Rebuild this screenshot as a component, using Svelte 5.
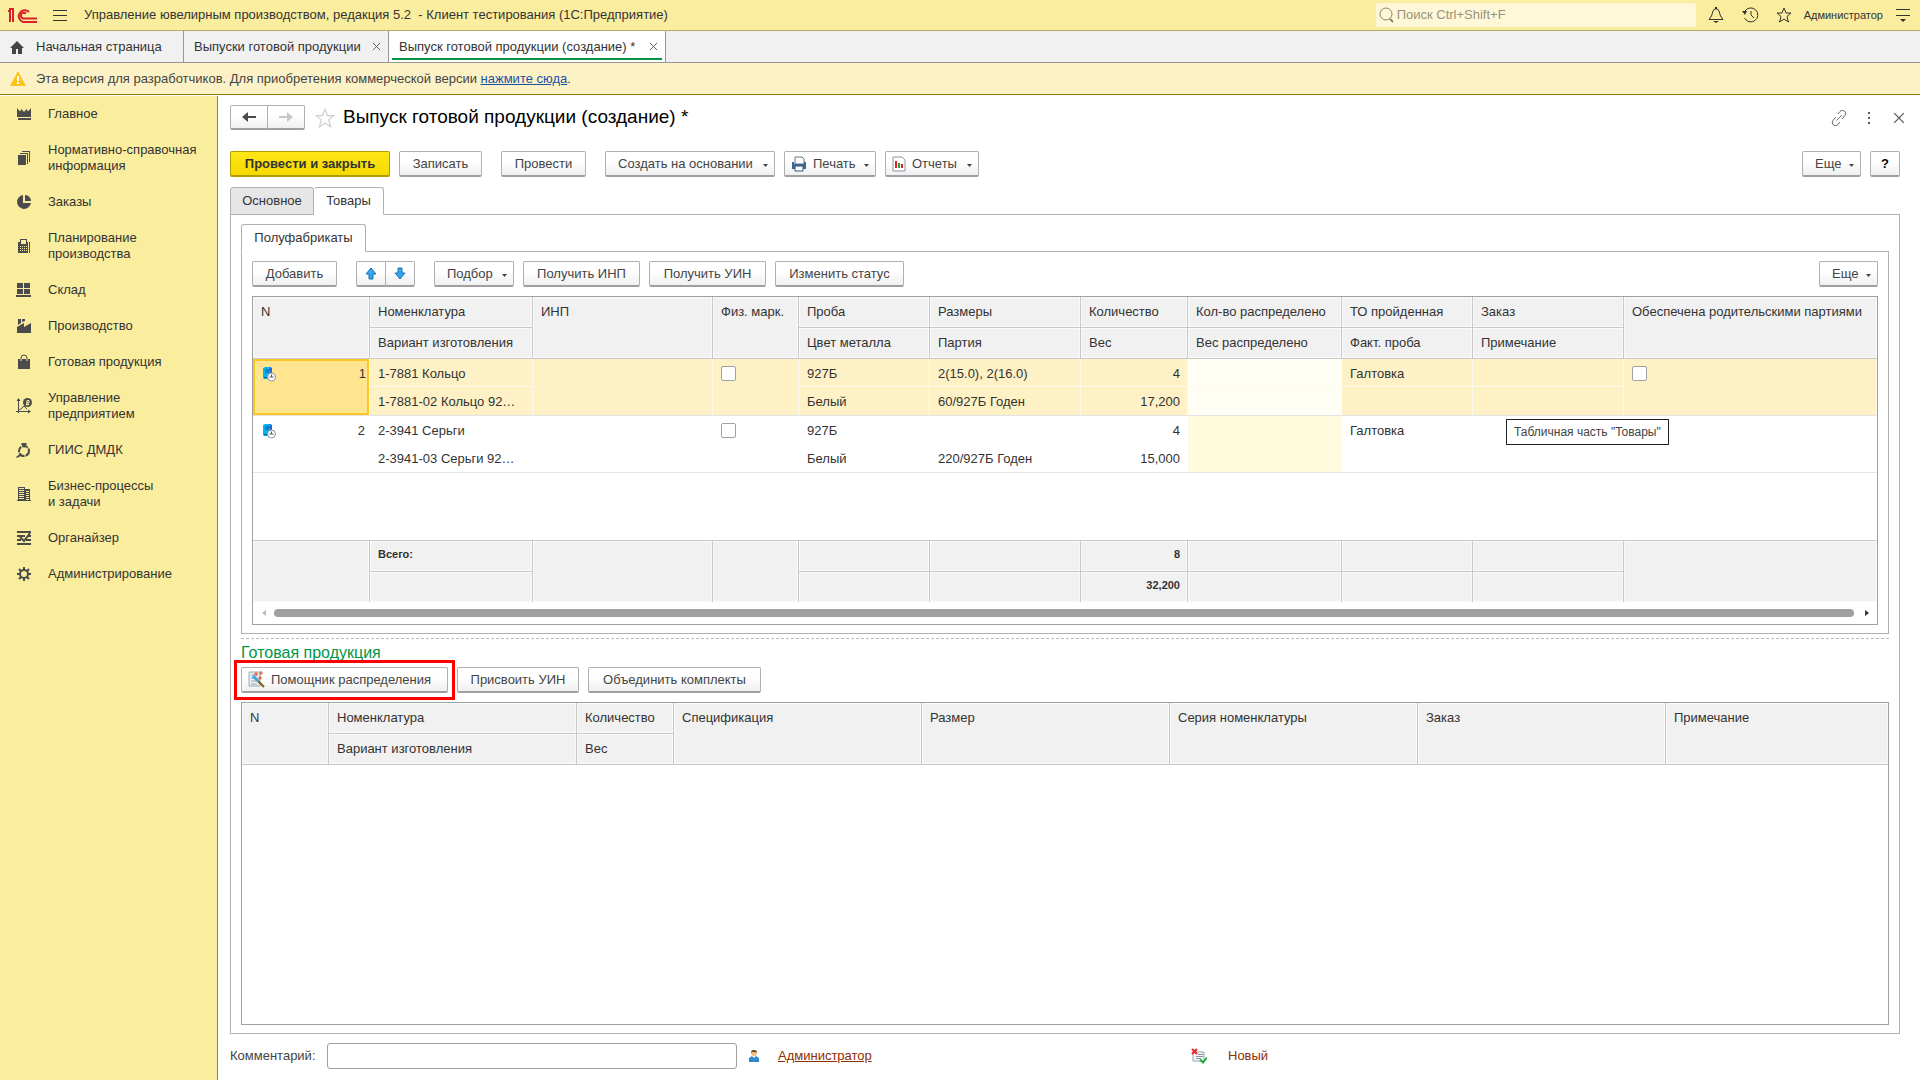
<script lang="ts">
  const sections = [
    { icon: 'crown', lines: ['Главное'] },
    { icon: 'docs', lines: ['Нормативно-справочная', 'информация'] },
    { icon: 'pie', lines: ['Заказы'] },
    { icon: 'calc', lines: ['Планирование', 'производства'] },
    { icon: 'store', lines: ['Склад'] },
    { icon: 'factory', lines: ['Производство'] },
    { icon: 'bag', lines: ['Готовая продукция'] },
    { icon: 'chart', lines: ['Управление', 'предприятием'] },
    { icon: 'ring', lines: ['ГИИС ДМДК'] },
    { icon: 'building', lines: ['Бизнес-процессы', 'и задачи'] },
    { icon: 'organizer', lines: ['Органайзер'] },
    { icon: 'gear', lines: ['Администрирование'] }
  ];

  const goodsCols = [117, 163, 180, 86, 131, 151, 107, 154, 131, 151];
  const goods = [
    { n: 1, name: '1-7881 Кольцо', variant: '1-7881-02 Кольцо 92…', probe: '927Б', color: 'Белый', sizes: '2(15.0), 2(16.0)', lot: '60/927Б Годен', qty: '4', weight: '17,200', op: 'Галтовка' },
    { n: 2, name: '2-3941 Серьги', variant: '2-3941-03 Серьги 92…', probe: '927Б', color: 'Белый', sizes: '', lot: '220/927Б Годен', qty: '4', weight: '15,000', op: 'Галтовка' }
  ];

  let selected = $state(1);
  let comment = $state('');
</script>

{#snippet sectionIcon(name: string)}
  <svg width="16" height="16" viewBox="0 0 16 16" fill="#4b4b4b" aria-hidden="true">
    {#if name === 'crown'}
      <path d="M1 2l3 3.500L5.500 3 8 6l2.500-3L12 5.500 15 2v9H1zM2 12h13v2H2z" />
    {:else if name === 'docs'}
      <path d="M2 5h8v10H2zM4 3h8v11h-1V4H4zM6 1h8v11h-1V2H6z" />
    {:else if name === 'pie'}
      <path d="M7 1v8h8A7 7 0 1 1 7 1zM9 1a6 6 0 0 1 6 6H9z" />
    {:else if name === 'calc'}
      <path fill-rule="evenodd" d="M2 4h2V1h7v3h1v11H2zM5 2v4h5V2zM4 8v1h1V8zM6 8v1h1V8zM8 8v1h1V8zM10 8v1h1V8zM4 10v1h1v-1zM6 10v1h1v-1zM8 10v1h1v-1zM10 10v1h1v-1zM4 12v1h1v-1zM6 12v1h1v-1zM8 12v1h1v-1zM10 12v1h1v-1zM13 4h1v11h-1z" />
    {:else if name === 'store'}
      <path d="M1 1h6v5H1zM8 1h6v5H8zM1 7h6v5H1zM8 7h6v5H8zM0 13h15v2H0z" />
    {:else if name === 'factory'}
      <path d="M2 1h3v4l-3 2zM6 1h3v2L6 4zM1 9l7-4v4l7-4v10H1z" />
    {:else if name === 'bag'}
      <path d="M2 5h12v10H2z" />
      <path d="M5 7V4a3 3 0 0 1 6 0v3" fill="none" stroke="#4b4b4b" />
      <path d="M5 5v2M11 5v2" stroke="#fbed9e" />
    {:else if name === 'chart'}
      <path d="M2.500 1v14M0 13.500h14M3 12l3-2 2-2 3 3" fill="none" stroke="#4b4b4b" />
      <path d="M2.500 0l2 3h-4zM15 13.500l-3-2v4z" />
      <circle cx="11.500" cy="4.500" r="4.500" />
      <path d="M11 7.500V2.500h2v2.500h-3M10 6.500h3" fill="none" stroke="#fbed9e" />
    {:else if name === 'ring'}
      <circle cx="8" cy="9" r="5" fill="none" stroke="#4b4b4b" stroke-width="2" stroke-dasharray="6 1" />
      <path d="M5 2l1-1h4l1 1-3 4zM4 12l-4 3 1 1 4-2z" />
    {:else if name === 'building'}
      <path fill-rule="evenodd" d="M2 1h7v2h5v11h1v1H1v-1h1zM3 2v1h5V2zM3 4v1h5V4zM3 6v1h5V6zM3 8v1h5V8zM3 10v1h5v-1zM3 12v1h5v-1zM10 5v1h3V5zM10 7v1h3V7zM10 9v1h3V9zM10 11v1h3v-1zM10 13v1h3v-1z" />
    {:else if name === 'organizer'}
      <path d="M1 1h14v2H1zM1 5h8v2H1zM12 5h3v2h-3zM1 9h4v2H1zM10 9h5v2h-5zM1 13h14v2H1z" />
      <path d="M4 7l4 4 6-8" fill="none" stroke="#4b4b4b" stroke-width="2" />
    {:else}
      <circle cx="8" cy="8" r="4" fill="none" stroke="#4b4b4b" stroke-width="2" />
      <path d="M8 1v3M8 12v3M1 8h3M12 8h3M3 3l2 2M11 11l2 2M3 13l2-2M11 5l2-2" stroke="#4b4b4b" stroke-width="2" />
    {/if}
  </svg>
{/snippet}

{#snippet star(size: number, color: string)}
  <svg width={size} height={size} viewBox="0 0 16 16" fill="none" stroke={color} aria-hidden="true">
    <path d="M8 1l2 5h5l-4 3.500 1.500 5.500L8 12l-4.500 3L5 9.500 1 6h5z" />
  </svg>
{/snippet}

{#snippet caret()}
  <svg class="caret" width="5" height="3" viewBox="0 0 5 3" aria-hidden="true"><path d="M0 0h5L2.500 3z" fill="#444" /></svg>
{/snippet}

{#snippet cross(size: number)}
  <svg width={size} height={size} viewBox="0 0 10 10" aria-hidden="true"><path d="M1 1l8 8M9 1l-8 8" stroke="#555" fill="none" /></svg>
{/snippet}

{#snippet rowIcon()}
  <svg width="16" height="16" viewBox="0 0 16 16" aria-hidden="true">
    <path d="M1 2l2-1h6v12H2l-1-1z" fill="#00b4ef" />
    <path d="M8 1l2 1v11H8z" fill="#2a62d8" />
    <path d="M3 4h5M3 6h4M2 11.500h5" stroke="#08539c" />
    <circle cx="9.500" cy="11" r="4" fill="#fff" stroke="#8a949c" />
    <path d="M9.500 8.500V11H7.500M9.500 11h2" stroke="#555" fill="none" />
  </svg>
{/snippet}

<svelte:head><title>Выпуск готовой продукции (создание) *</title></svelte:head>

<div class="app">
  <header class="topbar">
    <svg width="30" height="17" viewBox="0 0 30 17" fill="none" stroke="#d8232a" stroke-width="2" role="img" aria-label="1C">
      <path d="M0 4h2v11M1 2h4v13" />
      <path d="M21 5a6 6 0 1 0-6 10h14" />
      <path d="M18 6.500a3 3 0 1 0-3 5h14" />
    </svg>
    <button class="plain burger" aria-label="Меню">
      <svg width="14" height="13" viewBox="0 0 14 13" stroke="#333"><path d="M0 1.500h14M0 6.500h14M0 11.500h14" /></svg>
    </button>
    <span class="app-title">Управление ювелирным производством, редакция 5.2 &nbsp;- Клиент тестирования (1С:Предприятие)</span>
    <label class="search">
      <svg width="16" height="16" viewBox="0 0 16 16" fill="none" stroke="#8c865f"><circle cx="7" cy="7" r="6" /><path d="M11 12l3 3" stroke-width="2" /></svg>
      <input type="search" aria-label="Поиск" placeholder="Поиск Ctrl+Shift+F" />
    </label>
    <button class="plain top-icon" aria-label="Уведомления">
      <svg width="16" height="16" viewBox="0 0 16 16" fill="none" stroke="#333"><path d="M1 12.500h14l-2.500-3.500L11 4 9.500 2h-3L5 4 3.500 9z" /><path d="M5 14h6l-3 2zM7 0h2v2H7z" fill="#333" stroke="none" /></svg>
    </button>
    <button class="plain top-icon" aria-label="История">
      <svg width="17" height="16" viewBox="0 0 17 16" fill="none" stroke="#333"><path d="M3 4a7 7 0 1 1-.5 7M9 4v4l3 3" /><path d="M0 4h5l-2 4z" fill="#333" stroke="none" /></svg>
    </button>
    <button class="plain top-icon" aria-label="Избранное">{@render star(16, '#333')}</button>
    <button class="plain user">Администратор</button>
    <button class="plain" aria-label="Настройки">
      <svg width="14" height="14" viewBox="0 0 14 14"><path d="M0 1.500h14M0 7.500h14" stroke="#333" /><path d="M4 11h6l-3 3z" fill="#333" /></svg>
    </button>
  </header>

  <nav class="tabs" aria-label="Открытые окна">
    <button class="tab home">
      <svg width="14" height="14" viewBox="0 0 14 14" fill="#444"><path d="M7 1l7 7h-2v6H8V9H6v5H2V8H0z" /></svg>
      Начальная страница
    </button>
    <div class="tab list">
      <button class="plain">Выпуски готовой продукции</button>
      <button class="plain" aria-label="Закрыть">{@render cross(9)}</button>
    </div>
    <div class="tab active">
      <button class="plain">Выпуск готовой продукции (создание) *</button>
      <button class="plain" aria-label="Закрыть">{@render cross(9)}</button>
    </div>
  </nav>

  <div class="notice">
    <svg width="16" height="15" viewBox="0 0 16 15"><path d="M8 0l8 15H0z" fill="#fcc41b" /><path d="M7 5h2v5H7zM7 11h2v2H7z" fill="#fff" /></svg>
    <span>Эта версия для разработчиков. Для приобретения коммерческой версии <a href="#buy">нажмите сюда</a>.</span>
  </div>

  <div class="body">
    <nav class="sidebar" aria-label="Разделы">
      {#each sections as s}
        <button class="section">
          {@render sectionIcon(s.icon)}
          <span>{#each s.lines as line, i}{#if i}<br />{/if}{line}{/each}</span>
        </button>
      {/each}
    </nav>

    <main>
      <div class="head">
        <div class="pair nav">
          <button class="btn" aria-label="Назад"><svg width="14" height="10" viewBox="0 0 14 10"><path d="M6 0v4h8v2H6v4L0 5z" fill="#4b4b4b" /></svg></button>
          <button class="btn" aria-label="Вперед"><svg width="14" height="10" viewBox="0 0 14 10"><path d="M8 0v4H0v2h8v4l6-5z" fill="#c8c8c8" /></svg></button>
        </div>
        <button class="plain fav" aria-label="В избранное">{@render star(20, '#d0d0d0')}</button>
        <h1>Выпуск готовой продукции (создание) *</h1>
        <button class="plain" aria-label="Ссылка">
          <svg width="16" height="16" viewBox="0 0 16 16" fill="none" stroke="#666"><path d="M7 4l2-2.500a3 3 0 0 1 5 4L11 9M9 12l-2 2.500a3 3 0 0 1-5-4L5 7M5.500 10.500l5-5" /></svg>
        </button>
        <button class="plain dots" aria-label="Еще"><svg width="2" height="12" viewBox="0 0 2 12" fill="#555"><path d="M0 0h2v2H0zM0 5h2v2H0zM0 10h2v2H0z" /></svg></button>
        <button class="plain close" aria-label="Закрыть">{@render cross(12)}</button>
      </div>

      <div class="bar commands">
        <button class="btn primary">Провести и закрыть</button>
        <button class="btn w83">Записать</button>
        <button class="btn spaced w85">Провести</button>
        <button class="btn drop spaced w170">Создать на основании {@render caret()}</button>
        <button class="btn drop iconed w92">
          <svg width="16" height="16" viewBox="0 0 16 16"><path d="M4 1h7l2 2v5H4z" fill="#fff" stroke="#62788c" /><path d="M1 6h2v2h10V6h2v7H1z" fill="#3b6a96" /><path d="M4 10h8v5H4z" fill="#fff" stroke="#38546e" /></svg>
          Печать {@render caret()}
        </button>
        <button class="btn drop iconed w94">
          <svg width="14" height="16" viewBox="0 0 14 16"><path d="M1 1h9l3 3v11H1z" fill="#fff" stroke="#8796a5" /><path d="M3 5h2v7H3zM9 8h2v4H9z" fill="#e02020" /><path d="M6 7h2v5H6z" fill="#27a03c" /></svg>
          Отчеты {@render caret()}
        </button>
        <span class="grow"></span>
        <button class="btn drop w59">Еще {@render caret()}</button>
        <button class="btn help">?</button>
      </div>

      <div class="form-tabs" role="tablist">
        <button class="form-tab w84" role="tab" aria-selected="false">Основное</button>
        <button class="form-tab w70 current" role="tab" aria-selected="true">Товары</button>
      </div>

      <section class="panel">
        <div class="form-tabs" role="tablist">
          <button class="form-tab w125 current" role="tab" aria-selected="true">Полуфабрикаты</button>
        </div>
        <section class="inner">
          <div class="bar">
            <button class="btn w85">Добавить</button>
            <div class="pair spaced">
              <button class="btn" aria-label="Переместить вверх"><svg width="12" height="13" viewBox="0 0 12 13"><path d="M6 1l5 6H8v5H4V7H1z" fill="#35a8ee" stroke="#1c6fb0" /></svg></button>
              <button class="btn" aria-label="Переместить вниз"><svg width="12" height="13" viewBox="0 0 12 13"><path d="M6 12l5-6H8V1H4v5H1z" fill="#35a8ee" stroke="#1c6fb0" /></svg></button>
            </div>
            <button class="btn drop spaced w80">Подбор {@render caret()}</button>
            <button class="btn w117">Получить ИНП</button>
            <button class="btn w117">Получить УИН</button>
            <button class="btn w129">Изменить статус</button>
            <span class="grow"></span>
            <button class="btn drop w59">Еще {@render caret()}</button>
          </div>

          <div class="grid goods">
            <table>
              <colgroup>
                {#each goodsCols as w}<col style="width: {w}px" />{/each}
                <col />
              </colgroup>
              <thead>
                <tr>
                  <th rowspan="2">N</th>
                  <th>Номенклатура</th>
                  <th rowspan="2">ИНП</th>
                  <th rowspan="2">Физ. марк.</th>
                  <th>Проба</th>
                  <th>Размеры</th>
                  <th>Количество</th>
                  <th>Кол-во распределено</th>
                  <th>ТО пройденная</th>
                  <th>Заказ</th>
                  <th rowspan="2">Обеспечена родительскими партиями</th>
                </tr>
                <tr>
                  <th>Вариант изготовления</th>
                  <th>Цвет металла</th>
                  <th>Партия</th>
                  <th>Вес</th>
                  <th>Вес распределено</th>
                  <th>Факт. проба</th>
                  <th>Примечание</th>
                </tr>
              </thead>
              <tbody>
                {#each goods as g}
                  <tr class="first" class:selected={g.n === selected} onclick={() => (selected = g.n)}>
                    <td rowspan="2" class="num"><div>{@render rowIcon()}<span>{g.n}</span></div></td>
                    <td>{g.name}</td>
                    <td rowspan="2"></td>
                    <td rowspan="2"><input type="checkbox" aria-label="Физ. марк., строка {g.n}" /></td>
                    <td>{g.probe}</td>
                    <td>{g.sizes}</td>
                    <td class="right">{g.qty}</td>
                    <td class="alloc"></td>
                    <td>{g.op}</td>
                    <td></td>
                    <td rowspan="2">{#if g.n === 1}<input type="checkbox" aria-label="Обеспечена, строка {g.n}" />{/if}</td>
                  </tr>
                  <tr class="second" class:selected={g.n === selected} onclick={() => (selected = g.n)}>
                    <td>{g.variant}</td>
                    <td>{g.color}</td>
                    <td>{g.lot}</td>
                    <td class="right">{g.weight}</td>
                    <td class="alloc"></td>
                    <td></td>
                    <td></td>
                  </tr>
                {/each}
                <tr class="filler"><td colspan="11"></td></tr>
              </tbody>
              <tfoot>
                <tr>
                  <td rowspan="2"></td>
                  <td>Всего:</td>
                  <td rowspan="2"></td>
                  <td rowspan="2"></td>
                  <td></td>
                  <td></td>
                  <td class="right">8</td>
                  <td></td>
                  <td></td>
                  <td></td>
                  <td rowspan="2"></td>
                </tr>
                <tr>
                  <td></td>
                  <td></td>
                  <td></td>
                  <td class="right">32,200</td>
                  <td></td>
                  <td></td>
                  <td></td>
                </tr>
              </tfoot>
            </table>
            <div class="scroll">
              <svg width="4" height="6" viewBox="0 0 4 6"><path d="M4 0v6L0 3z" fill="#bbb" /></svg>
              <span class="thumb"></span>
              <svg width="4" height="6" viewBox="0 0 4 6"><path d="M0 0v6l4-3z" fill="#333" /></svg>
            </div>
            <div class="tooltip" role="tooltip">Табличная часть "Товары"</div>
          </div>
        </section>

        <div class="splitter"></div>
        <h2>Готовая продукция</h2>
        <div class="bar">
          <div class="marked">
            <button class="btn iconed w207">
              <svg width="17" height="17" viewBox="0 0 17 17"><path d="M1 1h11v14H1z" fill="#e8eef3" stroke="#9aa9b5" /><path d="M3 4h7M3 7h4M3 10h5M3 13h6" stroke="#9aa9b5" /><path d="M5 5l5 5" stroke="#3da2e6" stroke-width="3" /><path d="M10 10l6 6" stroke="#7a5a17" stroke-width="2" /><path d="M8 1v4M6 3h4M13 0v4M11 2h4M12 5v4M10 7h4" stroke="#e8502a" /></svg>
              Помощник распределения
            </button>
          </div>
          <button class="btn w122">Присвоить УИН</button>
          <button class="btn w173">Объединить комплекты</button>
        </div>

        <div class="grid output">
          <table>
            <colgroup>
              <col class="c-n" /><col class="c-wide" /><col class="c-qty" /><col class="c-wide" /><col class="c-wide" /><col class="c-wide" /><col class="c-wide" /><col />
            </colgroup>
            <thead>
              <tr>
                <th rowspan="2">N</th>
                <th>Номенклатура</th>
                <th>Количество</th>
                <th rowspan="2">Спецификация</th>
                <th rowspan="2">Размер</th>
                <th rowspan="2">Серия номенклатуры</th>
                <th rowspan="2">Заказ</th>
                <th rowspan="2">Примечание</th>
              </tr>
              <tr>
                <th>Вариант изготовления</th>
                <th>Вес</th>
              </tr>
            </thead>
          </table>
        </div>
      </section>

      <footer>
        <label for="comment">Комментарий:</label>
        <input id="comment" type="text" bind:value={comment} />
        <svg class="person" width="12" height="14" viewBox="0 0 12 14"><circle cx="6" cy="4" r="3" fill="#f3bd7c" /><path d="M3 4a3 3 0 0 1 6 0L8 3H4z" fill="#5b4320" /><path d="M1 13V9l3-2 2 2 2-2 3 2v4z" fill="#3089c8" /></svg>
        <a class="author" href="#author">Администратор</a>
        <svg class="status-icon" width="16" height="16" viewBox="0 0 16 16"><path d="M2 4h11v9H2z" fill="#f3f5f7" stroke="#96a4af" /><path d="M7 6.500h5M5 8.500h7M5 10.500h5" stroke="#8696a3" /><path d="M1 1l5 5M6 1L1 6" stroke="#e02a2a" stroke-width="2" /><path d="M9 11.500l3 3 4-5" fill="none" stroke="#1fae3c" stroke-width="2" /></svg>
        <a class="state" href="#state">Новый</a>
      </footer>
    </main>
  </div>
</div>

<style>
  :global(body) {
    margin: 0;
    background: #fff;
  }
  .app {
    display: flex;
    flex-direction: column;
    min-height: 100vh;
    font: 13px/16px "Liberation Sans", Arial, sans-serif;
    color: #333;
  }
  .app * {
    box-sizing: border-box;
  }
  button,
  input {
    font: inherit;
    color: inherit;
  }
  svg {
    display: block;
    flex: none;
  }
  .plain {
    border: 0;
    padding: 0;
    background: none;
    cursor: pointer;
  }

  .topbar {
    display: flex;
    align-items: center;
    height: 31px;
    padding: 0 10px 0 8px;
    background: #fbed9e;
    border-bottom: 1px solid #b3aa70;
  }
  .burger {
    margin: 0 17px 0 15px;
  }
  .app-title {
    flex: 1;
  }
  .search {
    display: flex;
    align-items: center;
    gap: 2px;
    width: 320px;
    height: 24px;
    padding: 0 3px;
    margin-right: 12px;
    background: #fef8d8;
    border-radius: 2px;
  }
  .search input {
    flex: 1;
    min-width: 0;
    padding: 0;
    border: 0;
    outline: 0;
    background: none;
  }
  .search input::placeholder {
    color: #98937a;
    opacity: 1;
  }
  .top-icon {
    width: 16px;
    margin-right: 18px;
  }
  .user {
    margin: 0 13px 0 -6px;
    font-size: 11px;
  }

  .tabs {
    display: flex;
    height: 32px;
    background: #f1f1f1;
    border-bottom: 1px solid #989898;
  }
  .tab {
    display: flex;
    align-items: center;
    justify-content: space-between;
    gap: 8px;
    padding: 0 7px 0 10px;
    border: 0;
    border-right: 1px solid #989898;
    background: none;
    white-space: nowrap;
  }
  .home {
    justify-content: flex-start;
    gap: 12px;
    width: 184px;
  }
  .list {
    width: 205px;
  }
  .active {
    width: 277px;
    background: linear-gradient(#009646, #009646) 50% 27px / calc(100% - 6px) 2px no-repeat #fff;
  }

  .notice {
    display: flex;
    align-items: center;
    gap: 10px;
    height: 32px;
    padding-left: 10px;
    background: #fdf2c5;
    border-bottom: 1px solid #92781c;
    color: #444;
  }
  .notice a {
    color: #1c50a8;
  }

  .body {
    flex: 1;
    display: flex;
    padding-top: 1px;
  }
  .sidebar {
    flex: none;
    width: 218px;
    background: #fbed9e;
    border-right: 1px solid #8f8755;
  }
  .section {
    display: flex;
    align-items: center;
    gap: 16px;
    width: 100%;
    padding: 10px 0 10px 16px;
    border: 0;
    background: none;
    text-align: left;
    white-space: nowrap;
  }

  main {
    flex: 1;
    min-width: 0;
    display: flex;
    flex-direction: column;
    padding: 9px 20px 11px 12px;
  }
  .head {
    display: flex;
    align-items: center;
    height: 25px;
  }
  .fav {
    margin: 0 8px 0 10px;
  }
  h1 {
    flex: 1;
    margin: 0;
    padding-bottom: 2px;
    font-size: 19px;
    line-height: 23px;
    font-weight: 400;
    color: #000;
  }
  .dots {
    margin: 0 23px 0 21px;
  }
  .close {
    margin-right: -5px;
  }

  .btn {
    display: inline-flex;
    align-items: center;
    justify-content: center;
    gap: 6px;
    height: 26px;
    padding: 0 4px;
    border: 1px solid #b0b0b0;
    border-bottom: 2px solid #a0a0a0;
    border-radius: 2px;
    background: linear-gradient(#fff 40%, #f0f0f0);
    color: #444;
    white-space: nowrap;
  }
  .caret {
    margin: 4px 0 0 auto;
  }
  .drop {
    justify-content: flex-start;
    padding: 0 6px 0 12px;
    gap: 0;
  }
  .iconed {
    justify-content: flex-start;
    gap: 6px;
    padding-left: 6px;
  }
  .primary {
    width: 160px;
    border-color: #b09b00;
    background: linear-gradient(#ffe716, #f5d900);
    color: #333;
    font-weight: 700;
  }
  .help {
    width: 30px;
    color: #000;
    font-weight: 700;
  }
  .pair {
    display: flex;
  }
  .pair .btn {
    width: 30px;
  }
  .pair .btn:first-child {
    border-radius: 2px 0 0 2px;
  }
  .pair .btn + .btn {
    margin-left: -1px;
    border-radius: 0 2px 2px 0;
  }
  .pair.nav .btn {
    width: 38px;
    height: 25px;
  }
  .bar {
    display: flex;
    gap: 9px;
  }
  .commands {
    margin-top: 21px;
  }
  .spaced {
    margin-left: 10px;
  }
  .grow {
    flex: 1;
  }
  .w59 { width: 59px; }
  .w70 { width: 70px; }
  .w80 { width: 80px; }
  .w83 { width: 83px; }
  .w84 { width: 84px; }
  .w85 { width: 85px; }
  .w92 { width: 92px; }
  .w94 { width: 94px; }
  .w117 { width: 117px; }
  .w122 { width: 122px; }
  .w125 { width: 125px; }
  .w129 { width: 129px; }
  .w170 { width: 170px; }
  .w173 { width: 173px; }
  .w207 { width: 207px; }

  .form-tabs {
    display: flex;
    margin-top: 10px;
  }
  .form-tab {
    height: 28px;
    margin-bottom: -1px;
    padding: 0;
    border: 1px solid #b0b0b0;
    border-radius: 3px 3px 0 0;
    background: #e6e6e6;
  }
  .form-tab + .form-tab {
    border-left: 0;
  }
  .form-tab.current {
    background: #fff;
    border-bottom-color: #fff;
    position: relative;
  }
  .panel {
    flex: 1;
    display: flex;
    flex-direction: column;
    padding: 0 10px 8px;
    border: 1px solid #b0b0b0;
  }
  .panel > .form-tabs {
    margin-top: 9px;
  }
  .inner {
    padding: 9px 10px 8px;
    border: 1px solid #b0b0b0;
  }

  .grid {
    position: relative;
    border: 1px solid #a0a0a0;
    background: #fff;
  }
  .goods {
    margin-top: 9px;
  }
  table {
    width: 100%;
    table-layout: fixed;
    border-collapse: separate;
    border-spacing: 0;
  }
  th,
  td {
    padding: 0 7px;
    text-align: left;
    font-weight: 400;
    white-space: nowrap;
    overflow: hidden;
  }
  th,
  tfoot td {
    height: 31px;
    padding: 7px 7px 6px 8px;
    vertical-align: top;
    border-right: 1px solid #c8c8c8;
    border-bottom: 1px solid #c8c8c8;
    background: #f1f1f1;
    box-shadow: inset 0 0 0 1px #fafafa;
  }
  th:last-child,
  tfoot tr:first-child td:last-child {
    border-right: 0;
  }
  thead tr:nth-child(2) th:last-child {
    border-right: 1px solid #c8c8c8;
  }
  tbody td {
    padding-left: 8px;
    vertical-align: top;
    border-right: 1px solid transparent;
  }
  .first td {
    height: 28px;
    padding-top: 7px;
  }
  .second td {
    height: 29px;
    padding-top: 7px;
    border-bottom: 1px solid #e4e4e4;
  }
  .first td[rowspan] {
    border-bottom: 1px solid #e4e4e4;
  }
  .selected td {
    background: #fef1c5;
    border-right-color: #fffaf0;
  }
  .first.selected td:not([rowspan]) {
    border-bottom: 1px solid #fffaf0;
  }
  tbody .num {
    padding: 0;
  }
  .num div {
    display: flex;
    justify-content: space-between;
    align-items: flex-start;
    height: 56px;
    padding: 7px 4px 0 9px;
  }
  .selected .num div {
    padding: 5px 1px 0 7px;
    border: 2px solid #fcc726;
    background: #ffe58f;
  }
  tbody .alloc {
    background: #fffbdc;
    border-right-color: #fffbdc;
  }
  .selected .alloc {
    background: #fffef4;
    border-right-color: #fffef4;
  }
  .right {
    text-align: right;
  }
  .filler td {
    height: 68px;
    border-bottom: 1px solid #c8c8c8;
  }
  tfoot td {
    padding-top: 5px;
    font-size: 11px;
    font-weight: 700;
  }
  tfoot tr:last-child td,
  tfoot td[rowspan] {
    border-bottom: 0;
  }
  tfoot tr:last-child td {
    height: 30px;
  }
  input[type='checkbox'] {
    appearance: none;
    display: block;
    width: 15px;
    height: 15px;
    margin: 0;
    border: 1px solid #a0a0a0;
    border-radius: 2px;
    background: #fff;
  }
  .scroll {
    display: flex;
    align-items: center;
    gap: 8px;
    height: 22px;
    padding: 0 8px 0 9px;
  }
  .thumb {
    flex: 1;
    height: 8px;
    margin-right: 3px;
    border-radius: 4px;
    background: #a0a0a0;
  }
  .tooltip {
    position: absolute;
    top: 122px;
    left: 1253px;
    padding: 4px 7px;
    border: 1px solid #222;
    background: #fff;
    font-size: 12px;
    white-space: nowrap;
    color: #444;
  }

  .splitter {
    margin-top: 4px;
    border-top: 1px dashed #bbb;
  }
  h2 {
    margin: 4px 0 5px;
    font-size: 16px;
    line-height: 19px;
    font-weight: 400;
    color: #009646;
  }
  .marked {
    outline: 3px solid #f00;
    outline-offset: 4px;
  }
  .output {
    flex: 1;
    margin-top: 9px;
  }
  .c-n { width: 87px; }
  .c-qty { width: 97px; }
  .c-wide { width: 248px; }

  footer {
    display: flex;
    align-items: center;
    margin-top: 9px;
  }
  footer label {
    width: 97px;
    color: #444;
  }
  footer input {
    width: 410px;
    height: 26px;
    padding: 0 6px;
    border: 1px solid #a0a0a0;
    border-radius: 3px;
    background: #fff;
  }
  footer a {
    color: #8b2f00;
  }
  .person {
    margin: 0 18px 0 11px;
  }
  .author {
    width: 413px;
  }
  .status-icon {
    margin-right: 21px;
  }
  .state {
    text-decoration: none;
  }
</style>
